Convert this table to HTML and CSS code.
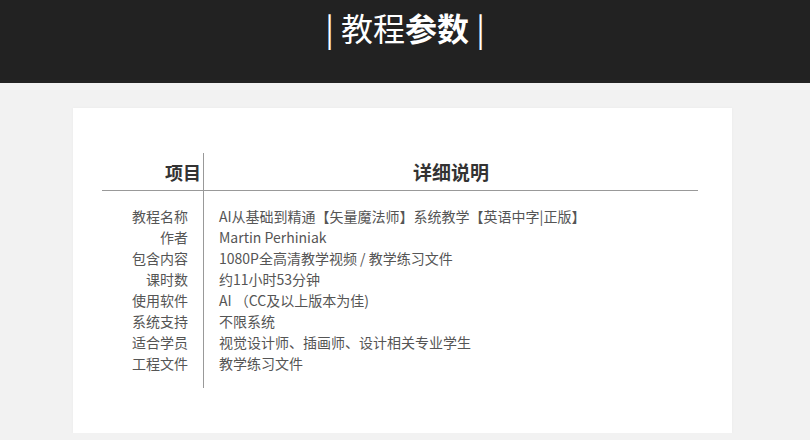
FILE: index.html
```html
<!DOCTYPE html>
<html lang="zh-CN">
<head>
    <meta charset="UTF-8">
    <title>教程参数</title>
    <link rel="stylesheet" href="styles.css">
</head>
<body>

<div class="top-bar">
    <h1><span class="bar">|</span> 教程<b>参数</b> <span class="bar">|</span></h1>
</div>

<div class="card">
    <table class="params">
        <thead>
            <tr>
                <th class="col-name">项目</th>
                <th class="col-desc">详细说明</th>
            </tr>
        </thead>
        <tbody>
            <tr class="first"><td class="col-name">教程名称</td><td class="col-desc">AI从基础到精通【矢量魔法师】系统教学【英语中字|正版】</td></tr>
            <tr><td class="col-name">作者</td><td class="col-desc">Martin Perhiniak</td></tr>
            <tr><td class="col-name">包含内容</td><td class="col-desc">1080P全高清教学视频 / 教学练习文件</td></tr>
            <tr><td class="col-name">课时数</td><td class="col-desc">约11小时53分钟</td></tr>
            <tr><td class="col-name">使用软件</td><td class="col-desc">AI （CC及以上版本为佳)</td></tr>
            <tr><td class="col-name">系统支持</td><td class="col-desc">不限系统</td></tr>
            <tr><td class="col-name">适合学员</td><td class="col-desc">视觉设计师、插画师、设计相关专业学生</td></tr>
            <tr class="last"><td class="col-name">工程文件</td><td class="col-desc">教学练习文件</td></tr>
        </tbody>
    </table>
</div>

</body>
</html>
```

FILE: styles.css
```css
body {
    margin: 0;
    background: #f2f2f2;
    font-family: "Noto Sans CJK SC", "Noto Sans", sans-serif;
    color: #555;
}
.top-bar {
    background: #222222;
    height: 83px;
    text-align: center;
}
.top-bar h1 {
    margin: 0;
    padding-top: 4px;
    font-size: 32px;
    line-height: 46px;
    font-weight: 400;
    color: #fff;
}
.top-bar h1 b { font-weight: 700; }
.card {
    background: #fff;
    width: 630px;
    margin: 25px 0 0 73px;
    padding: 45px 0 45px 29px;
    box-shadow: 0 0 3px rgba(0,0,0,0.04);
}
.params {
    width: 596px;
    border-collapse: collapse;
}
.params th {
    font-size: 18px;
    font-weight: 700;
    color: #333;
    height: 37px;
    padding: 0;
    border-bottom: 1px solid #999;
    vertical-align: middle;
}
.params th.col-name {
    width: 99px;
    text-align: right;
    padding-right: 2px;
}
.params th.col-desc { font-size: 19px; }
.params .col-name { border-right: 1px solid #999; }
.params td {
    font-size: 14px;
    line-height: 21px;
    padding: 0;
    color: #555;
}
.params td.col-name {
    text-align: right;
    padding-right: 15px;
}
.params td.col-desc { padding-left: 15px; }
.params tr.first td { padding-top: 15px; }
.params tr.last td { padding-bottom: 14px; }
```
